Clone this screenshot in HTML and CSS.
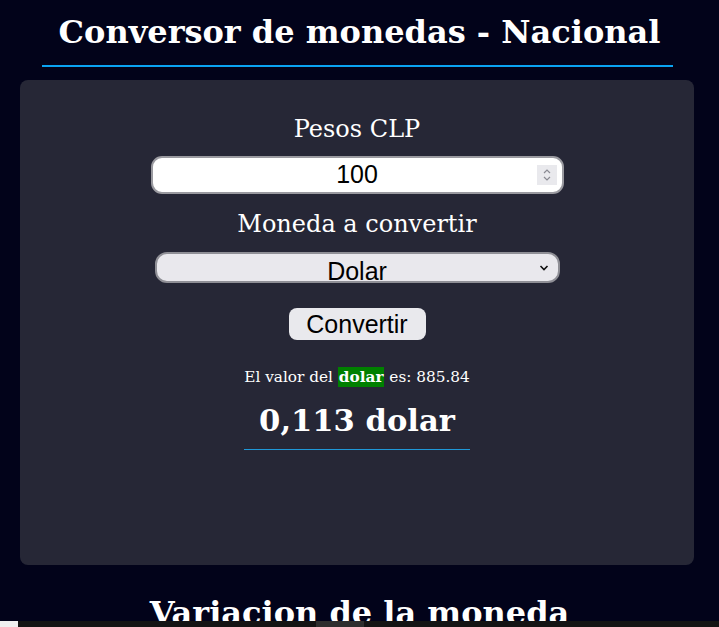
FILE: index.html
```html
<!DOCTYPE html>
<html lang="es">
<head>
<meta charset="utf-8">
<title>Conversor de monedas</title>
<link rel="stylesheet" href="styles.css">
</head>
<body>
<header class="top">
  <h1 class="title">Conversor de monedas - Nacional</h1>
  <div class="rule"></div>
</header>
<main class="card">
  <label class="label" for="pesos">Pesos CLP</label>
  <div class="number-wrap">
    <input id="pesos" class="number" type="text" value="100">
    <span class="spin">
      <svg width="12" height="18" viewBox="0 0 12 18"><path d="M3 7 L6 4 L9 7 M3 11 L6 14 L9 11" fill="none" stroke="#8a8a92" stroke-width="1.2"/></svg>
    </span>
  </div>
  <label class="label label-gap" for="moneda">Moneda a convertir</label>
  <div class="select">
    <span class="select-text">Dolar</span>
    <svg class="chev" width="10" height="8" viewBox="0 0 10 8"><path d="M1.5 2 L5 5.5 L8.5 2" fill="none" stroke="#111" stroke-width="1.6"/></svg>
  </div>
  <button class="btn" type="button">Convertir</button>
  <div class="result">
    <p class="info">El valor del <span class="hl">dolar</span> es: 885.84</p>
    <p class="amount">0,113 dolar</p>
  </div>
</main>
<h2 class="sub">Variacion de la moneda</h2>
<div class="hscroll"><span class="corner"></span><span class="thumb"></span></div>
</body>
</html>
```
FILE: styles.css
```css
html, body {
  margin: 0;
  padding: 0;
}
body {
  background: #02031a;
  color: #ffffff;
  font-family: "DejaVu Serif", Georgia, serif;
  overflow: hidden;
  height: 627px;
}
.top {
  display: flex;
  flex-direction: column;
  align-items: center;
  padding-top: 12px;
}
.title {
  margin: 0;
  font-size: 32px;
  line-height: 40px;
  font-weight: bold;
}
.rule {
  width: 631px;
  height: 1.5px;
  background: #0aa3f2;
  margin-top: 13px;
  margin-left: -4px;
}
.card {
  background: #262736;
  border-radius: 8px;
  margin: 13px 25px 0 20px;
  height: 485px;
  box-sizing: border-box;
  padding-top: 31px;
  display: flex;
  flex-direction: column;
  align-items: center;
}
.label {
  font-size: 24px;
  line-height: 36px;
}
.label-gap {
  margin-top: 12px;
}
.number-wrap {
  position: relative;
  margin-top: 9px;
  width: 413px;
  height: 38px;
  box-sizing: border-box;
  border: 2px solid #9a9aa0;
  border-radius: 11px;
  background: #ffffff;
  display: flex;
  align-items: center;
}
.number {
  border: none;
  outline: none;
  background: transparent;
  width: 100%;
  text-align: center;
  font-family: "Liberation Sans", Arial, sans-serif;
  font-size: 25px;
  color: #000;
  padding: 0;
  height: 34px;
}
.spin {
  position: absolute;
  right: 5px;
  top: 7px;
  width: 20px;
  height: 20px;
  background: #e9e9ed;
  display: flex;
  align-items: center;
  justify-content: center;
}
.select {
  position: relative;
  margin-top: 10px;
  width: 405px;
  height: 31px;
  box-sizing: border-box;
  border: 2px solid #8f8f96;
  border-radius: 12px;
  background: #e9e8ed;
  display: flex;
  justify-content: center;
  align-items: flex-end;
  overflow: hidden;
}
.select-text {
  font-family: "Liberation Sans", Arial, sans-serif;
  font-size: 25px;
  line-height: 28px;
  color: #000;
  margin-bottom: -4px;
}
.chev {
  position: absolute;
  right: 9px;
  top: 10px;
}
.btn {
  margin-top: 25px;
  width: 137px;
  height: 32px;
  border: none;
  border-radius: 8px;
  background: #e9e9ed;
  font-family: "Liberation Sans", Arial, sans-serif;
  font-size: 25px;
  color: #000;
  padding: 0;
  line-height: 32px;
}
.result {
  margin-top: 26px;
  display: flex;
  flex-direction: column;
  align-items: center;
  border-bottom: 1px solid #1f98d8;
  padding-bottom: 11px;
}
.info {
  margin: 0;
  font-size: 15.3px;
  line-height: 22px;
}
.hl {
  background: #008000;
  font-weight: bold;
  padding: 1px 1px;
}
.amount {
  margin: 14px 0 0 0;
  font-size: 30.6px;
  line-height: 36px;
  font-weight: bold;
}
.sub {
  margin: 28px 0 0 0;
  text-align: center;
  font-size: 32px;
  line-height: 40px;
  font-weight: bold;
}
.hscroll {
  position: fixed;
  left: 0;
  right: 0;
  bottom: 0;
  height: 6px;
  background: #141414;
}
.corner {
  position: absolute;
  left: 0;
  top: 0;
  width: 18px;
  height: 6px;
  background: #f0f0f0;
}
.thumb {
  position: absolute;
  left: 316px;
  top: 0;
  width: 48px;
  height: 6px;
  background: #2e2e2e;
}
```
